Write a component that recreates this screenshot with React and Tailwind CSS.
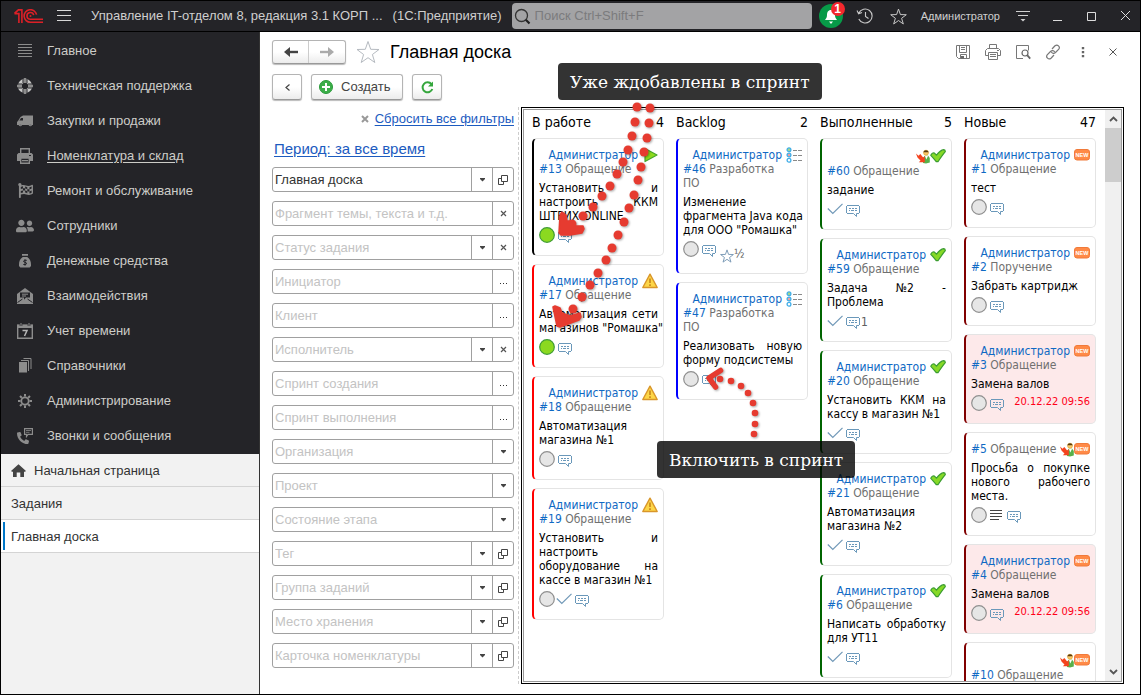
import React from "react";
import { FaFlagCheckered, FaUserFriends, FaPhoneAlt } from "react-icons/fa";

/* ---------- icons ---------- */

const Svg = ({ w = 16, h = w, box = `0 0 ${w} ${h}`, className = "", children }) => (
  <svg width={w} height={h} viewBox={box} fill="none" aria-hidden="true" className={`shrink-0 ${className}`}>
    {children}
  </svg>
);

const Logo = () => (
  <Svg w={30} h={15}>
    <g stroke="#dd2027" strokeWidth="1.6">
      <path d="M.5 4.500 4.400.900h3.500V14M4.900 14V4.600H.5" />
      <path d="M22.600 5.700A6.300 6.300 0 1 0 16.500 13.300H29" />
      <path d="M19.700 6.200A3.400 3.400 0 1 0 16.500 10.300H29" />
    </g>
    <circle cx="16.500" cy="7" r="1" fill="#dd2027" />
  </Svg>
);

const navIcons = {
  lines: (
    <Svg w={14} h={14}>
      <path d="M0 .5h14M0 3.500h14M0 6.500h14M0 9.500h14M0 12.500h14" stroke="#8c8c8c" />
    </Svg>
  ),
  ring: (
    <Svg w={16}>
      <circle cx="8" cy="8" r="5.200" stroke="#c8c8c8" strokeWidth="4" />
      <path d="M8 0v5M8 11v5M0 8h5M11 8h5" stroke="#8c8c8c" strokeWidth="3" />
      <path d="M6 0v5M10 0v5M6 11v5M10 11v5M0 6h5M0 10h5M11 6h5M11 10h5" stroke="#242428" />
    </Svg>
  ),
  van: (
    <Svg w={16} h={12}>
      <path d="M0 10V7l1-1 2.500-4L6 .5h10V10h-1a1.800 1.800 0 0 1-3.400 0H5a1.800 1.800 0 0 1-3.400 0z" fill="#8c8c8c" />
      <path d="M2.400 5.500 4 3h2v2.500z" fill="#242428" />
      <circle cx="3.300" cy="10" r="1" fill="#77777a" />
      <circle cx="13.300" cy="10" r="1" fill="#77777a" />
    </Svg>
  ),
  printer: (
    <Svg w={16}>
      <path d="M3.700 5V.7h8.600V5" stroke="#8c8c8c" strokeWidth="1.400" />
      <path d="M0 6.500 1.500 5h13L16 6.500V13h-3v-3H3v3H0z" fill="#8c8c8c" />
      <path d="M3.700 10h8.600v5.300H3.700zM5 12.600h6" stroke="#8c8c8c" strokeWidth="1.400" />
      <path d="M12 7h2v1h-2z" fill="#242428" />
    </Svg>
  ),
  flag: <FaFlagCheckered size={15} color="#8c8c8c" aria-hidden="true" />,
  people: <FaUserFriends size={18} color="#8c8c8c" aria-hidden="true" className="shrink-0" />,
  money: (
    <Svg w={14} h={14}>
      <path d="M4 0h6v1.800H4zM4.800 3h4.400C12 4.800 13 7.500 13 10.500V12l-1.300 1.500H2.300L1 12v-1.500C1 7.500 2 4.800 4.800 3z" fill="#8c8c8c" />
      <path d="M8.800 6.300H6.300L5.500 7.500l3 1.500-.6 1.500H5.300M7 5.200v6.500" stroke="#242428" />
    </Svg>
  ),
  mail: (
    <Svg w={16}>
      <path d="M0 6 8 0l8 6v10H0z" fill="#8c8c8c" />
      <path d="M3 4.500h10v5H9l-2 2.200V9.500H3z" fill="#242428" />
      <path d="M5 6.200h6M5 8h4" stroke="#8c8c8c" />
      <path d="m.5 14.500 5-3.500M15.500 14.500l-5-3.500" stroke="#242428" />
    </Svg>
  ),
  calendar: (
    <Svg w={16}>
      <path d="M.7 2.500h14.600v12.800H.7z" stroke="#8c8c8c" strokeWidth="1.400" />
      <path d="M0 1.500h16V5H0z" fill="#8c8c8c" />
      <path d="M4 0v3M12 0v3" stroke="#242428" strokeWidth="2.600" />
      <path d="M4 0v3M12 0v3" stroke="#8c8c8c" />
      <path d="M5.500 7.500h4.500L7.500 13" stroke="#b4b4b4" strokeWidth="1.500" />
    </Svg>
  ),
  stack: (
    <Svg w={14} h={15}>
      <path d="M1 4h8v10.500H1z" fill="#8c8c8c" />
      <path d="M3 2.500h7.500V13M5.500.5H13V11" stroke="#8c8c8c" />
    </Svg>
  ),
  gear: (
    <Svg w={14}>
      <circle cx="7" cy="7" r="3.700" stroke="#8c8c8c" strokeWidth="1.800" />
      <path d="M7 0v2.500M7 11.500V14M0 7h2.500M11.500 7H14M2 2l1.800 1.800M10.200 10.200 12 12M12 2l-1.800 1.800M3.800 10.200 2 12" stroke="#8c8c8c" strokeWidth="2" />
    </Svg>
  ),
  phone: (
    <span className="relative flex h-4 w-4 items-end">
      <FaPhoneAlt size={12} color="#8c8c8c" aria-hidden="true" />
      <Svg w={11} h={10} className="absolute right-0 top-0">
        <path d="M.5.500h10v7H5.500L3.500 10V7.500h-3z" fill="#242428" />
        <path d="M2.600.600h7.800v5.800H6L4.500 8.500V6.400H2.600z" stroke="#8c8c8c" strokeWidth="1.200" />
        <path d="M4 2.500h5M4 4.300h3.500" stroke="#8c8c8c" strokeWidth=".8" />
      </Svg>
    </span>
  ),
};

const HomeIcon = () => (
  <Svg w={15} h={13}>
    <path d="M7.500.300 15 7l-1 .8h-1V13H9.300V8.500H5.700V13H2V7.800H1L0 7z" fill="#444" />
  </Svg>
);

const StarOutline = ({ size, color, weight = 1.4 }) => (
  <Svg w={size} box="0 0 24 24">
    <path d="m12 1.500 2.700 7.800 8.300.2-6.600 5 2.400 8L12 17.700l-6.800 4.800 2.400-8-6.600-5 8.300-.2z" stroke={color} strokeWidth={weight} />
  </Svg>
);

const Caret = () => (
  <Svg w={7} h={4}>
    <path d="M1 0h5v1L3.500 3.500 1 1z" fill="#444" />
  </Svg>
);
const SmallCross = () => (
  <Svg w={7}>
    <path d="m1 1 5 5M6 1 1 6" stroke="#555" strokeWidth="1.200" />
  </Svg>
);
const OpenIcon = () => (
  <Svg w={10}>
    <path d="M3.500.5h6v6h-6zM3 3.500H.5v6h5V7" stroke="#444" />
  </Svg>
);
const Dots = () => (
  <Svg w={9} h={6}>
    <path d="M1 4h1v1H1zM4 4h1v1H4zM7 4h1v1H7z" fill="#333" />
  </Svg>
);

/* card markers */
const Play = () => (
  <Svg w={16}>
    <path d="M3 1.500 15 8 3 14.500z" fill="#8edb1c" stroke="#45a52b" strokeWidth="1.200" strokeLinejoin="round" />
  </Svg>
);
const Warning = () => (
  <Svg w={16}>
    <path d="M8 1.200 15.200 14.500H.8z" fill="#fdd648" stroke="#d9962a" strokeWidth="1.400" strokeLinejoin="round" />
    <path d="M8 5.500v4.500M8 11.200v1.800" stroke="#c98a1e" strokeWidth="1.700" />
  </Svg>
);
const ListMark = () => (
  <Svg w={16}>
    <g stroke="#42aee8" strokeWidth="1.300">
      <circle cx="3" cy="2.700" r="1.900" fill="#a5d98a" />
      <circle cx="3" cy="8" r="1.900" fill="#eea0a0" />
      <circle cx="3" cy="13.300" r="1.900" fill="#fff" />
    </g>
    <path d="M7 3.500h4M12 3.500h4M7 8.500h4M12 8.500h4M7 13.500h4M12 13.500h4" stroke="#8a8a8a" />
  </Svg>
);
const GreenCheck = () => (
  <Svg w={16}>
    <path d="M.8 7.300C1.800 4.800 3.800 4.300 5.200 5.800l1.300 1.400C8.500 4.500 11 2.200 13.800 1.700c1 .2 1.500 1 1.500 2C12.500 7 10.500 10 8 13.700H6.200C4.500 11.500 3 9.500.8 7.300z" fill="#86d926" stroke="#3a9c30" strokeWidth="1.200" strokeLinejoin="round" />
  </Svg>
);
const NewMark = () => (
  <svg width="16" height="12" viewBox="0 0 16 12" className="shrink-0" role="img" aria-label="NEW">
    <rect x=".5" y=".5" width="15" height="10.500" rx="2.500" fill="#ff8a47" stroke="#f07a3a" />
    <text x="8" y="8" textAnchor="middle" fontFamily="Liberation Sans" fontWeight="700" fontSize="5.500" fill="#fff">
      NEW
    </text>
  </svg>
);
const PersonMark = () => (
  <Svg w={14} h={15}>
    <path d="M7 14V9l1.800-2.300h3.400L13.800 9v4.500L10 14.500z" fill="#58b04a" />
    <path d="m9 7 1.300 3.500L12 7z" fill="#fff" />
    <circle cx="10" cy="3.700" r="2.500" fill="#f9c96a" stroke="#e0a52a" strokeWidth=".6" />
    <path d="M7.300 3.200a2.800 2.800 0 0 1 5.400 0z" fill="#5a3b12" />
    <path d="M0 4.500 2.500 6.800 4.300 5l2.900 3.500L8.800 7v6.300H2.800l1.700-1.700L1.500 8.500z" fill="#f4431e" />
  </Svg>
);
const marks = { play: Play, warn: Warning, list: ListMark, check: GreenCheck, new: NewMark, person: PersonMark };

const Bubble = () => (
  <Svg w={16} h={13}>
    <path d="M2 .5h12M2 8.500h6.500l3 3v-3H14M1.500 1v7M14.500 1v7" stroke="#6a98ba" />
    <path d="M4 3.500h2M7 3.500h2M10 3.500h2M4 5.500h1M6 5.500h3M10 5.500h2" stroke="#6a98ba" />
  </Svg>
);
const ThinCheck = () => (
  <Svg w={16}>
    <path d="m.8 7.500 5 5L15.500 2.800" stroke="#7199b8" strokeWidth="1.200" />
  </Svg>
);
const footIcons = {
  on: (
    <Svg w={16}>
      <circle cx="8" cy="8" r="7.300" fill="#8bd920" stroke="#3f9c34" strokeWidth="1.200" />
    </Svg>
  ),
  off: (
    <Svg w={16}>
      <circle cx="8" cy="8" r="7.300" fill="#e6e6e6" stroke="#8f8f8f" strokeWidth="1.200" />
    </Svg>
  ),
  check: <ThinCheck />,
  bubble: <span className="flex pl-px pt-1"><Bubble /></span>,
  text: (
    <Svg w={16}>
      <path d="M2 3.500h12M2 6.500h12M2 9.500h12M2 12.500h9" stroke="#444" />
    </Svg>
  ),
  star: (
    <span className="flex pl-0.5 pt-2">
      <StarOutline size={14} color="#7697b4" weight={1.6} />
    </span>
  ),
};

/* ---------- data ---------- */

const nav = [
  ["lines", "Главное"],
  ["ring", "Техническая поддержка"],
  ["van", "Закупки и продажи"],
  ["printer", "Номенклатура и склад"],
  ["flag", "Ремонт и обслуживание"],
  ["people", "Сотрудники"],
  ["money", "Денежные средства"],
  ["mail", "Взаимодействия"],
  ["calendar", "Учет времени"],
  ["stack", "Справочники"],
  ["gear", "Администрирование"],
  ["phone", "Звонки и сообщения"],
];

const fields = [
  ["Доска", ["caret", "open"], "Главная доска"],
  ["Фрагмент темы, текста и т.д.", ["clear"]],
  ["Статус задания", ["caret", "clear"]],
  ["Инициатор", ["dots"]],
  ["Клиент", ["dots"]],
  ["Исполнитель", ["caret", "clear"]],
  ["Спринт создания", ["dots"]],
  ["Спринт выполнения", ["dots"]],
  ["Организация", ["caret"]],
  ["Проект", ["caret"]],
  ["Состояние этапа", ["caret"]],
  ["Тег", ["caret", "open"]],
  ["Группа заданий", ["caret", "open"]],
  ["Место хранения", ["caret", "open"]],
  ["Карточка номенклатуры", ["caret", "open"]],
];
const fieldButtons = {
  caret: ["Выбрать из списка", <Caret />],
  open: ["Открыть", <OpenIcon />],
  clear: ["Очистить", <SmallCross />],
  dots: ["Выбрать", <Dots />],
};

const admin = "Администратор";
const columns = [
  {
    title: "В работе",
    count: 4,
    cards: [
      { edge: "border-l-black", name: admin, marks: ["play"], id: 13, type: "Обращение", text: "Установить и настроить ККМ ШТРИХ-ONLINE", foot: ["on", "bubble"] },
      { edge: "border-l-[#ff0000]", name: admin, marks: ["warn"], id: 17, type: "Обращение", text: "Автоматизация сети магазинов\u00a0\"Ромашка\"", foot: ["on", "bubble"] },
      { edge: "border-l-[#ff0000]", name: admin, marks: ["warn"], id: 18, type: "Обращение", text: "Автоматизация магазина №1", foot: ["off", "bubble"] },
      { edge: "border-l-[#ff0000]", name: admin, marks: ["warn"], id: 19, type: "Обращение", text: "Установить и настроить оборудование на кассе в магазин №1", foot: ["off", "check", "bubble"] },
    ],
  },
  {
    title: "Backlog",
    count: 2,
    cards: [
      { edge: "border-l-[#0000ff]", name: admin, marks: ["list"], id: 46, type: "Разработка ПО", text: "Изменение фрагмента\u00a0Java\u00a0кода для\u00a0ООО\u00a0\"Ромашка\"", foot: ["off", "bubble", "star"], note: "½" },
      { edge: "border-l-[#0000ff]", name: admin, marks: ["list"], id: 47, type: "Разработка ПО", text: "Реализовать новую форму подсистемы", foot: ["off", "bubble"] },
    ],
  },
  {
    title: "Выполненные",
    count: 5,
    cards: [
      { edge: "border-l-[#006400]", marks: ["person", "check"], id: 60, type: "Обращение", text: "задание", foot: ["check", "bubble"] },
      { edge: "border-l-[#006400]", name: admin, marks: ["check"], id: 59, type: "Обращение", text: "Задача №2 - Проблема", foot: ["check", "bubble"], note: "1" },
      { edge: "border-l-[#006400]", name: admin, marks: ["check"], id: 20, type: "Обращение", text: "Установить ККМ на кассу в магазин №1", foot: ["check", "bubble"] },
      { edge: "border-l-[#006400]", name: admin, marks: ["check"], id: 21, type: "Обращение", text: "Автоматизация магазина №2", foot: ["check", "bubble"] },
      { edge: "border-l-[#006400]", name: admin, marks: ["check"], id: 6, type: "Обращение", text: "Написать обработку для УТ11", foot: ["check", "bubble"] },
    ],
  },
  {
    title: "Новые",
    count: 47,
    cards: [
      { edge: "border-l-[#800000]", name: admin, marks: ["new"], id: 1, type: "Обращение", text: "тест", foot: ["off", "bubble"] },
      { edge: "border-l-[#800000]", name: admin, marks: ["new"], id: 2, type: "Поручение", text: "Забрать картридж", foot: ["off", "bubble"] },
      { edge: "border-l-[#800000]", name: admin, marks: ["new"], id: 3, type: "Обращение", text: "Замена валов", foot: ["off", "bubble"], due: "20.12.22 09:56" },
      { edge: "border-l-[#800000]", inline: true, marks: ["person", "new"], id: 5, type: "Обращение", text: "Просьба о покупке нового рабочего места.", foot: ["off", "text", "bubble"] },
      { edge: "border-l-[#800000]", name: admin, marks: ["new"], id: 4, type: "Обращение", text: "Замена валов", foot: ["off", "bubble"], due: "20.12.22 09:56" },
      { edge: "border-l-[#800000]", marks: ["person", "new"], id: 10, type: "Обращение", foot: ["off", "bubble"] },
    ],
  },
];

/* ---------- parts ---------- */

const boardFont = "font-['DejaVu_Sans_Condensed','Noto_Sans',sans-serif]";
const raised = "border border-[#b4b4b4] border-b-[#999] bg-linear-to-b from-white from-50% to-[#ececec] shadow-[0_1px_1px_#bbb]";

function Header() {
  return (
    <header className="flex h-[31px] shrink-0 items-center border-b border-black bg-[#242428] pr-2 text-[13px] text-[#cfcfcf]">
      <span className="ml-[13px] flex"><Logo /></span>
      <button aria-label="Меню" className="ml-3 flex">
        <Svg w={16} h={12}><path d="M1 .5h14M1 5.500h14M1 10.500h14" stroke="#d8d8d8" /></Svg>
      </button>
      <h1 className="ml-[19px] whitespace-nowrap">Управление IT-отделом 8, редакция 3.1 КОРП ...</h1>
      <span className="ml-2.5 whitespace-nowrap">(1С:Предприятие)</span>
      <label className="ml-2.5 flex h-[26px] min-w-0 flex-1 items-center gap-1 rounded-sm bg-[#a3a3a5] pl-0.5">
        <Svg w={17} box="0 0 17 17">
          <circle cx="7.500" cy="7.500" r="6" stroke="#333" strokeWidth="1.300" />
          <path d="m11.800 11.800 3.700 3.700" stroke="#222" strokeWidth="2.200" />
        </Svg>
        <input aria-label="Поиск" placeholder="Поиск Ctrl+Shift+F" className="min-w-0 flex-1 bg-transparent outline-none placeholder:text-[#7b7b7d]" />
      </label>
      <button aria-label="Уведомления" className="relative ml-[7px] flex">
        <Svg w={24}>
          <circle cx="12" cy="12" r="12" fill="#079a48" />
          <path d="M12 6c3 0 4 2.500 4 5 0 2 .7 3.500 2 5H6c1.300-1.500 2-3 2-5 0-2.500 1-5 4-5zM10 17.500h4L12 20z" fill="#fff" />
        </Svg>
        <span className="absolute -right-0.5 -top-0.5 flex h-3.5 w-3.5 items-center justify-center rounded-full bg-[#f4282d] text-xs font-bold leading-none text-white">1</span>
      </button>
      <button aria-label="История" className="ml-[13px] flex">
        <Svg w={18} box="0 0 18 18">
          <path d="M2.800 6A7 7 0 1 1 2.800 12M1 3.500l1.600 3.300L6 5.500M9.500 5v4.500l3 2" stroke="#c8c8c8" strokeWidth="1.100" />
        </Svg>
      </button>
      <button aria-label="Избранное" className="ml-4 flex"><StarOutline size={17} color="#c8c8c8" /></button>
      <span className="ml-3.5 text-[11px]">Администратор</span>
      <button aria-label="Сервис" className="ml-[15px] flex">
        <Svg w={16}><path d="M1 3.500h14M3 7.500h10" stroke="#d0d0d0" /><path d="M5.500 11h5L8 13.500z" fill="#d0d0d0" /></Svg>
      </button>
      <button aria-label="Свернуть" className="ml-[21px] flex"><Svg w={12}><path d="M1 10.500h9" stroke="#ddd" /></Svg></button>
      <button aria-label="Развернуть" className="ml-[22px] flex"><Svg w={12}><path d="M1.500 2.500h8v8h-8z" stroke="#ddd" /></Svg></button>
      <button aria-label="Закрыть" className="ml-[22px] flex"><Svg w={12}><path d="m1 1 9 9M10 1l-9 9" stroke="#ddd" /></Svg></button>
    </header>
  );
}

function Sidebar() {
  return (
    <aside className="flex w-[259px] shrink-0 flex-col border-r border-[#333] bg-[#f2f2f2] text-[13px]">
      <nav className="flex flex-col bg-[#242428] pb-px pt-px text-[#cdcdc8]">
        {nav.map(([icon, label]) => (
          <a key={label} href="#" className="flex h-[35px] items-center gap-3.5 pl-4">
            <span className="flex w-4 justify-center">{navIcons[icon]}</span>
            <span className={icon === "printer" ? "underline underline-offset-2" : ""}>{label}</span>
          </a>
        ))}
      </nav>
      <nav className="flex flex-col text-[#333]">
        <a href="#" className="flex h-[33px] items-center gap-2 border-b border-[#d4d4d4] pl-2.5 pt-px"><HomeIcon />Начальная страница</a>
        <a href="#" className="flex h-[33px] items-center border-b border-[#d4d4d4] pl-2.5 pt-px">Задания</a>
        <a href="#" className="flex h-[33px] items-center border-b border-[#d4d4d4] bg-white py-0.5 pl-0.5">
          <span className="flex h-full items-center border-l-2 border-[#0077c8] pl-1.5 pt-px">Главная доска</span>
        </a>
      </nav>
    </aside>
  );
}

function Toolbar() {
  const tool = "flex h-[18px] w-[18px] items-center justify-center";
  return (
    <div className="flex items-center pr-[18px]">
      <div className={`flex h-6 rounded-[3px] ${raised}`}>
        <button aria-label="Назад" className="flex w-9 items-center justify-center border-r border-[#ccc]">
          <Svg w={14} h={10}><path d="M14 5H4" stroke="#444" strokeWidth="2.400" /><path d="M6 0v10L0 5z" fill="#444" /></Svg>
        </button>
        <button aria-label="Вперед" className="flex w-9 items-center justify-center">
          <Svg w={14} h={10}><path d="M0 5h10" stroke="#aaa" strokeWidth="2.400" /><path d="M8 0v10l6-5z" fill="#aaa" /></Svg>
        </button>
      </div>
      <button aria-label="Добавить в избранное" className="ml-2.5 flex"><StarOutline size={24} color="#b5bac0" weight={1} /></button>
      <h2 className="ml-2.5 text-lg leading-6 text-black">Главная доска</h2>
      <div className="ml-auto flex items-center gap-3">
        <button aria-label="Сохранить" className={tool}>
          <Svg w={16}><path d="M1.500 1.500h13v13h-11l-2-2zM4.500 2v6.500h7V2M5.500 14.500v-4h6v4M6 3.500h4M6 5.500h4" stroke="#777" /><path d="M6 12h3v2.500H6z" fill="#666" /></Svg>
        </button>
        <button aria-label="Печать" className={tool}>
          <Svg w={16}><path d="M4.500 4.500v-4h7v4M3.500 11.500h-3v-5l2-2h11l2 2v5h-3M3.500 8.500h9v7h-9zM5 10.500h6M5 12.500h6M12 6.500h2" stroke="#777" /></Svg>
        </button>
        <button aria-label="Просмотр" className={tool}>
          <Svg w={16}><path d="M8 14.500H1.500v-13h12v5" stroke="#777" /><circle cx="10" cy="9" r="3" stroke="#666" strokeWidth="1.200" /><path d="m12.200 11.200 3 3.500" stroke="#666" strokeWidth="1.800" /></Svg>
        </button>
        <button aria-label="Ссылка" className={tool}>
          <Svg w={16}><path d="m7 5 3-3.200c2.500-2 5.500 1 3.800 3.400L10.500 8.500C9 9.800 7.200 9.500 6.300 8M9 11l-3 3.200c-2.500 2-5.500-1-3.800-3.400L5.500 7.500C7 6.200 8.800 6.500 9.700 8" stroke="#777" strokeWidth="1.200" /></Svg>
        </button>
        <button aria-label="Еще" className={tool}>
          <Svg w={4} h={12}><path d="M.8 1h2.400v2.200H.8zM.8 5h2.400v2.200H.8zM.8 9h2.400v2.200H.8z" fill="#666" /></Svg>
        </button>
        <button aria-label="Закрыть форму" className={tool}><Svg w={8}><path d="m.5.500 7 7M7.500.500l-7 7" stroke="#555" /></Svg></button>
      </div>
    </div>
  );
}

function Commands() {
  return (
    <div className="mt-2.5 flex h-[26px] text-[13px] text-[#444]">
      <button aria-label="Свернуть фильтры" className={`flex w-[30px] items-center justify-center rounded-[3px] ${raised}`}>
        <Svg w={5} h={7}><path d="M4.500.500 1 3.500l3.500 3" stroke="#444" strokeWidth="1.200" /></Svg>
      </button>
      <button className={`ml-[9px] flex items-center gap-2 whitespace-nowrap rounded-[3px] pl-[7px] pr-3 ${raised}`}>
        <Svg w={14}><circle cx="7" cy="7" r="6.500" fill="#3cae49" stroke="#2b9a3a" /><path d="M7 3v8M3 7h8" stroke="#fff" strokeWidth="2" /></Svg>
        Создать
      </button>
      <button aria-label="Обновить" className={`ml-[9px] flex w-[30px] items-center justify-center rounded-[3px] ${raised}`}>
        <Svg w={13}><path d="M10.500 3.200A5 5 0 1 0 11.300 8" stroke="#34a63c" strokeWidth="2" /><path d="M12 .5v5H7z" fill="#34a63c" /></Svg>
      </button>
    </div>
  );
}

function Filters() {
  return (
    <section aria-label="Фильтры" className="flex w-[247px] shrink-0 flex-col border-r border-dashed border-[#ccc] pr-1">
      <a href="#" className="mt-1 flex items-center gap-1.5 self-end text-[13px] leading-4 text-[#1c5bbf]">
        <Svg w={8}><path d="m1 1 6 6M7 1 1 7" stroke="#999" strokeWidth="2" /></Svg>
        <span className="underline underline-offset-2">Сбросить все фильтры</span>
      </a>
      <a href="#" className="ml-0.5 mt-3 self-start text-[15px] leading-5 text-[#1c5bbf] underline underline-offset-2">Период: за все время</a>
      <div className="mt-2 flex flex-col gap-[9px]">
        {fields.map(([label, buttons, value]) => (
          <div key={label} className="flex h-[25px] rounded-[3px] border border-[#a0a0a0] bg-white">
            <input aria-label={label} placeholder={label} defaultValue={value} className="min-w-0 flex-1 bg-transparent pl-0.5 text-[13px] text-[#333] outline-none placeholder:text-[#c3c3c3]" />
            {buttons.map((b) => (
              <button key={b} aria-label={`${fieldButtons[b][0]}: ${label}`} className="flex w-[21px] items-center justify-center border-l border-[#a0a0a0]">
                {fieldButtons[b][1]}
              </button>
            ))}
          </div>
        ))}
      </div>
    </section>
  );
}

/* keeps a number sign and its digits together inside a justified line */
const withNumbers = (text) =>
  text.split(/(№\d+)(?= )/).map((part, i) => (i % 2 ? <span key={i} className="inline-block">{part}</span> : part));

function Card({ edge, name, inline, marks: cardMarks, id, type, text, foot, note, due }) {
  const badgeRow = cardMarks.map((m) => React.createElement(marks[m], { key: m }));
  return (
    <article className={`shrink-0 rounded-[5px] border border-l-2 border-[#e4e4e4] pb-3 pl-[5px] pr-[5px] pt-[9px] text-xs leading-[14px] ${edge} ${due ? "bg-[#fde9ea]" : "bg-white"}`}>
      {!inline && (
        <div className={`flex items-center justify-end ${name ? "h-3.5 gap-1" : "h-4"}`}>
          {name && <a href="#" className="text-[#0f69c4]">{name}</a>}
          {badgeRow}
        </div>
      )}
      <div className="flex items-center justify-between text-[#707070]">
        <p className={inline ? "whitespace-nowrap" : "pr-4"}>
          <a href="#" className="text-[#0f69c4]">#{id}</a> {type}
        </p>
        {inline && <span className="flex h-3.5 items-center">{badgeRow}</span>}
      </div>
      {text && <p className="mt-[5px] text-justify text-black">{withNumbers(text)}</p>}
      <div className="mt-1 flex min-h-4 items-start text-[#606060]">
        <div className="flex h-4 items-start gap-px">
          {foot.map((f) => <React.Fragment key={f}>{footIcons[f]}</React.Fragment>)}
        </div>
        {note && <span className={foot.includes("star") ? "pt-1.5" : "pt-0.5"}>{note}</span>}
        {due && <time className="ml-auto whitespace-nowrap text-[11px] text-[#ff0018]">{due}</time>}
      </div>
    </article>
  );
}

function Board() {
  return (
    <section aria-label="Доска" className={`ml-0.5 flex min-w-0 flex-1 border border-black p-px ${boardFont}`}>
      <div className="flex min-w-0 flex-1 border border-[#999]">
        <div className="flex min-w-0 flex-1 gap-3 overflow-hidden pl-2 pr-[9px]">
          {columns.map((col) => (
            <div key={col.title} className="flex min-w-0 flex-1 flex-col">
              <h3 className="flex h-7 shrink-0 items-center justify-between text-sm leading-4 text-black">
                <span className="pb-1">{col.title}</span>
                <span className="pb-1">{col.count}</span>
              </h3>
              <div className="flex flex-col gap-2">
                {col.cards.map((c) => <Card key={c.id} {...c} />)}
              </div>
            </div>
          ))}
        </div>
        <div className="flex w-4 shrink-0 flex-col bg-[#f0f0f0]">
          <button aria-label="Прокрутить вверх" className="flex h-[18px] items-center justify-center">
            <Svg w={9} h={6}><path d="m1 5 3.500-3.500L8 5" stroke="#555" strokeWidth="1.800" /></Svg>
          </button>
          <div className="h-[54px] bg-[#cdcdcd]" />
          <button aria-label="Прокрутить вниз" className="mt-auto flex h-[18px] items-center justify-center">
            <Svg w={9} h={6}><path d="m1 1 3.500 3.500L8 1" stroke="#555" strokeWidth="1.800" /></Svg>
          </button>
        </div>
      </div>
    </section>
  );
}

const trailA = [[637, 107], [635, 122], [632, 136], [628, 150], [623, 162], [617, 174], [610, 186], [602, 196], [593, 207], [583, 216], [572, 224]];
const trailB = [[650, 108], [649, 123], [647, 138], [644, 152], [641, 167], [638, 180], [634, 195], [629, 208], [624, 222], [618, 235], [612, 248], [606, 260], [598, 273], [590, 285], [582, 297], [573, 309]];
const trailC = [[754, 434], [755, 424], [755, 413], [753, 403], [748, 393], [741, 386], [731, 381], [720, 379]];

function Annotations() {
  const note = "absolute flex h-[37px] items-center whitespace-nowrap rounded-[4px] bg-black/80 px-3 pt-0.5 font-['DejaVu_Serif',serif] text-[17px] text-white";
  return (
    <div className="pointer-events-none absolute -inset-px overflow-hidden">
      <p className={`${note} left-[558px] top-[63px]`}>Уже ждобавлены в спринт</p>
      <p className={`${note} left-[657px] top-[441px]`}>Включить в спринт</p>
      <svg width="1141" height="695" viewBox="0 0 1141 695" fill="none" aria-hidden="true" className="absolute left-0 top-0 max-w-none drop-shadow-[1px_1px_1px_rgba(0,0,0,0.35)]">
        <g fill="#e63b30">
          {[...trailA, ...trailB].map(([x, y]) => <circle key={`${x}-${y}`} cx={x} cy={y} r="4.500" />)}
          {trailC.map(([x, y]) => <circle key={`${x}-${y}`} cx={x} cy={y} r="3.300" />)}
        </g>
        <g fill="#e63b30" stroke="#e63b30" strokeWidth="1.500" strokeLinejoin="round">
          <path d="M560 215 562 212 566 215 567 221 571 221 576 226 583 226 584 229 582 233 570 235 561 235 559 233z" />
          <path d="M553 307 555 306 560 308 562 313 570 316 580 313 581 317 579 320 560 327 557 326z" />
        </g>
        <path d="M720.500 370.500 709 378 715.500 387" stroke="#e63b30" strokeWidth="5.500" strokeLinecap="round" strokeLinejoin="round" />
      </svg>
    </div>
  );
}

export default function App() {
  return (
    <div className="relative flex h-screen flex-col overflow-hidden border border-black bg-white font-['Liberation_Sans',Arial,sans-serif]">
      <Header />
      <div className="flex min-h-0 flex-1">
        <Sidebar />
        <main className="flex min-w-0 flex-1 flex-col pl-3 pt-2">
          <Toolbar />
          <Commands />
          <div className="mb-2.5 mr-4 mt-[7px] flex min-h-0 flex-1">
            <Filters />
            <Board />
          </div>
        </main>
      </div>
      <Annotations />
    </div>
  );
}
